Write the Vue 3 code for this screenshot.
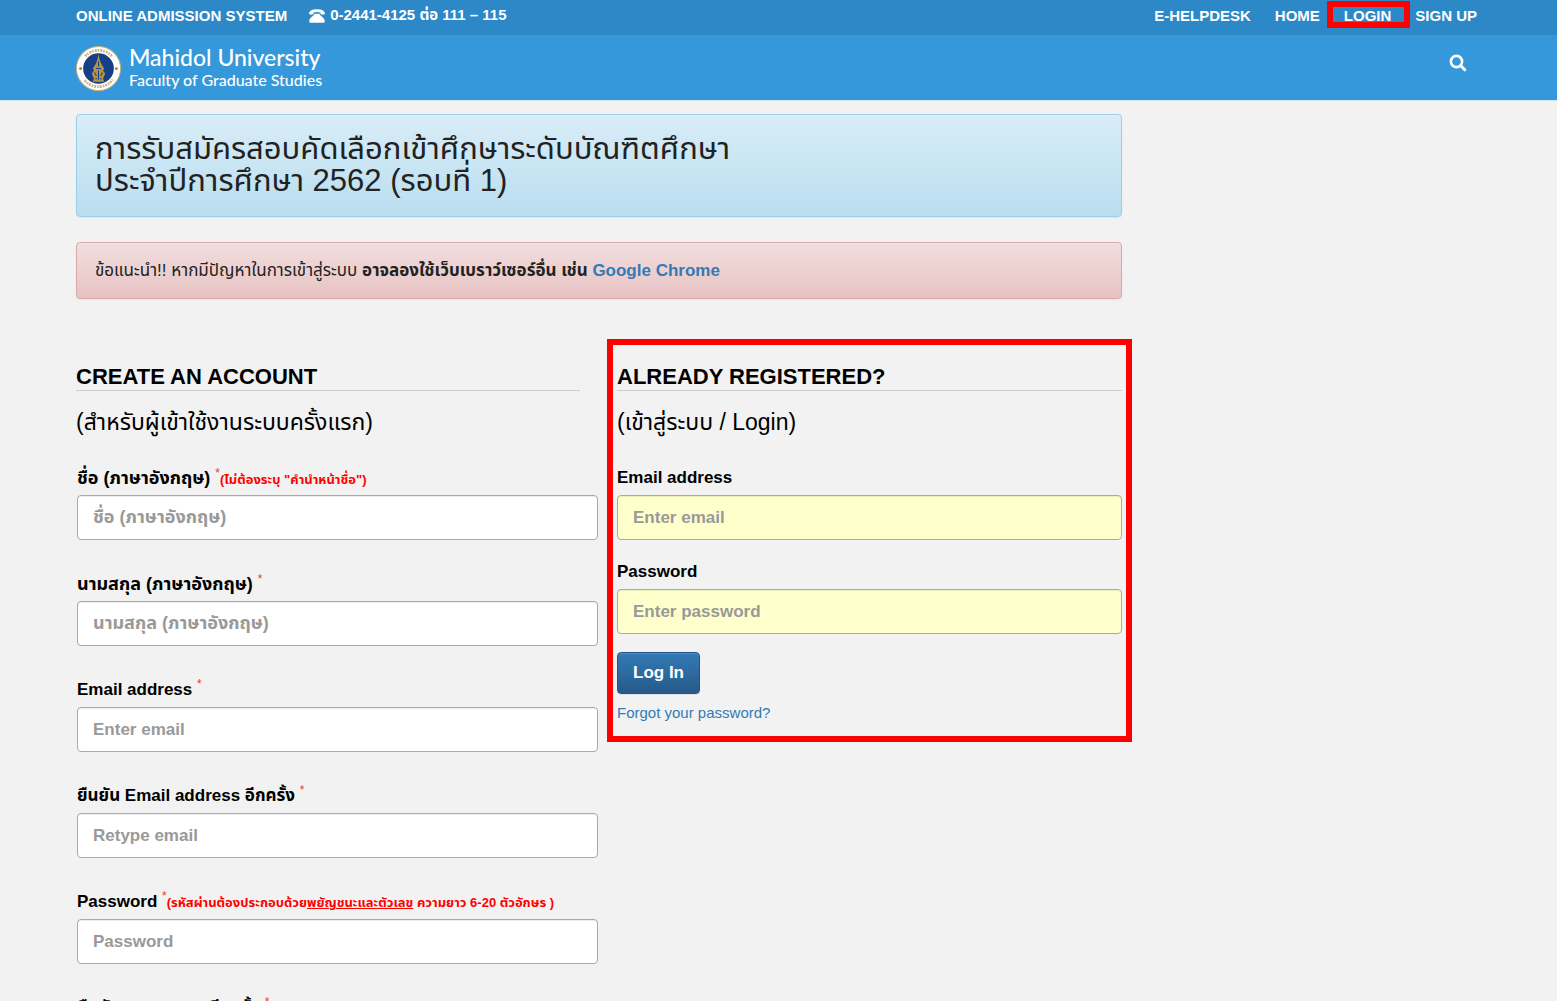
<template>
  <div class="page">
    <div class="topbar">
      <div class="container topbar__inner">
        <span class="topbar__title">ONLINE ADMISSION SYSTEM</span>
        <span class="topbar__phone">
          <svg class="phone-icon" viewBox="0 0 16 14" aria-hidden="true">
            <path d="M0 4.6C0.2 1.8 3.4 0.3 8 0.3s7.8 1.5 8 4.3c0 .7-.3.9-.9.9h-2.600c-.6 0-.9-.3-.9-.9V3.700C10.500 3.200 9.300 3 8 3s-2.500.2-3.600.7v.9c0 .6-.3.9-.9.9H.9c-.6 0-.9-.2-.9-.9z" />
            <path d="M5.500 4.700h5c.2 2.200 4.900 3.500 5.200 7v1.300c0 .5-.3.8-.8.8H1.100c-.5 0-.8-.3-.8-.8v-1.300c.3-3.500 5-4.800 5.200-7z" />
          </svg>
          0-2441-4125 ต่อ 111 – 115
        </span>
        <nav class="topbar__nav">
          <a
            v-for="link in links"
            :key="link.label"
            href="#"
            :class="{ marked: link.marked }"
          >{{ link.label }}</a>
        </nav>
      </div>
    </div>

    <header class="header">
      <div class="container header__inner">
        <a href="#" class="brand">
          <svg class="brand__seal" viewBox="0 0 44 44" aria-hidden="true">
            <circle cx="22" cy="22" r="21.500" fill="#fff" stroke="#c9b27c" />
            <circle cx="22" cy="22" r="17.800" fill="none" stroke="#b79a55" stroke-width="2.600" stroke-dasharray="1.500 1.100 2 .9" opacity=".75" />
            <path d="M1 22a21 21 0 0 1 6-14l5 5a14 14 0 0 0-4 9 14 14 0 0 0 3 8l-5 5a21 21 0 0 1-5-13z" fill="#fff" />
            <path d="M43 22a21 21 0 0 0-6-14l-5 5a14 14 0 0 1 4 9 14 14 0 0 1-3 8l5 5a21 21 0 0 0 5-13z" fill="#fff" />
            <circle cx="4.500" cy="22" r="1.500" fill="#b08a35" />
            <circle cx="39.500" cy="22" r="1.500" fill="#b08a35" />
            <circle cx="22" cy="22" r="15" fill="#173f86" />
            <path d="M22 8l1 5 1.500 4 3 5-1 2 2 3-2 5 1 3h-11l1-3-2-5 2-3-1-2 3-5 1.500-4z" fill="#b5933f" />
            <path d="M22 15v5M19.500 22h5M18 26l2 3M26 26l-2 3M22 24v9M19 32h1.500M23.500 32H25" stroke="#173f86" stroke-width="1" fill="none" />
          </svg>
          <span class="brand__text">
            <span class="brand__name">Mahidol University</span>
            <span class="brand__faculty">Faculty of Graduate Studies</span>
          </span>
        </a>
        <button class="search" type="button" aria-label="Search">
          <svg viewBox="0 0 18 18" aria-hidden="true">
            <circle cx="7.500" cy="7.500" r="5.600" fill="none" stroke="#fff" stroke-width="2.600" />
            <path d="M11.800 11.800l4 4" stroke="#fff" stroke-width="3" stroke-linecap="round" />
          </svg>
        </button>
      </div>
    </header>

    <div class="container">
      <main class="main">
        <div class="alert alert--info">
          <h1>การรับสมัครสอบคัดเลือกเข้าศึกษาระดับบัณฑิตศึกษา<br>ประจำปีการศึกษา 2562 (รอบที่ 1)</h1>
        </div>
        <div class="alert alert--danger">
          ข้อแนะนำ!! หากมีปัญหาในการเข้าสู่ระบบ
          <strong>อาจลองใช้เว็บเบราว์เซอร์อื่น เช่น <a href="#">Google Chrome</a></strong>
        </div>

        <div class="columns">
          <section class="register">
            <h2>CREATE AN ACCOUNT</h2>
            <p class="subtitle">(สำหรับผู้เข้าใช้งานระบบครั้งแรก)</p>
            <form class="register__form" @submit.prevent>
              <div v-for="field in registerFields" :key="field.id" class="field" :lang="field.lang">
                <label :for="field.id">
                  {{ field.label }} <sup>*</sup><small v-if="field.hint">{{ field.hint.before }}<u>{{ field.hint.key }}</u>{{ field.hint.after }}</small>
                </label>
                <input :id="field.id" :type="field.type" :placeholder="field.placeholder">
              </div>
            </form>
          </section>

          <section class="login">
            <h2>ALREADY REGISTERED?</h2>
            <p class="subtitle">(เข้าสู่ระบบ / Login)</p>
            <form class="login__form" @submit.prevent>
              <div class="field">
                <label for="login-email">Email address</label>
                <input id="login-email" v-model="email" type="email" placeholder="Enter email">
              </div>
              <div class="field">
                <label for="login-password">Password</label>
                <input id="login-password" v-model="password" type="password" placeholder="Enter password">
              </div>
              <button class="btn" type="submit">Log In</button>
              <a href="#" class="forgot">Forgot your password?</a>
            </form>
          </section>
        </div>
      </main>
    </div>
  </div>
</template>

<script setup>
import { ref } from 'vue'

const email = ref('')
const password = ref('')

const links = [
  { label: 'E-HELPDESK' },
  { label: 'HOME' },
  { label: 'LOGIN', marked: true },
  { label: 'SIGN UP' }
]

const registerFields = [
  {
    id: 'first-name',
    lang: 'th',
    label: 'ชื่อ (ภาษาอังกฤษ)',
    type: 'text',
    placeholder: 'ชื่อ (ภาษาอังกฤษ)',
    hint: { before: '(ไม่ต้องระบุ "คำนำหน้าชื่อ")', key: '', after: '' }
  },
  { id: 'last-name', lang: 'th', label: 'นามสกุล (ภาษาอังกฤษ)', type: 'text', placeholder: 'นามสกุล (ภาษาอังกฤษ)' },
  { id: 'email', label: 'Email address', type: 'email', placeholder: 'Enter email' },
  { id: 'email-again', label: 'ยืนยัน Email address อีกครั้ง', type: 'email', placeholder: 'Retype email' },
  {
    id: 'password',
    label: 'Password',
    type: 'password',
    placeholder: 'Password',
    hint: { before: '(รหัสผ่านต้องประกอบด้วย', key: 'พยัญชนะและตัวเลข', after: ' ความยาว 6-20 ตัวอักษร )' }
  },
  { id: 'password-again', label: 'ยืนยัน Password อีกครั้ง', type: 'password', placeholder: 'Retype password' }
]
</script>

<style>
body {
  background: #f2f2f2;
}
</style>

<style scoped>
.page {
  font-family: "Liberation Sans", "Noto Sans Thai", Loma, sans-serif;
  font-size: 15px;
  color: #000;
}

.page *,
.page *::after {
  box-sizing: border-box;
}

.container {
  max-width: 1405px;
  margin: 0 auto;
}

a {
  color: #337ab7;
  text-decoration: none;
}

/* Top bar */
.topbar {
  background: #2c88c6;
  color: #fff;
  font-weight: bold;
}

.topbar__inner {
  display: flex;
  align-items: center;
  height: 35px;
  padding: 0 4px 4px 0;
}

.topbar__phone {
  display: flex;
  align-items: center;
  gap: 5px;
  margin-left: 22px;
}

.phone-icon {
  width: 16px;
  height: 14px;
  fill: #fff;
}

.topbar__nav {
  display: flex;
  gap: 24px;
  margin-left: auto;
}

.topbar__nav a {
  position: relative;
  color: #fff;
}

.marked::after {
  content: "";
  position: absolute;
  inset: -6px -19px -4px -17px;
  border: 6px solid #f00;
}

/* Header */
.header {
  background: #3498db;
  border-bottom: 1px solid #d5e5f1;
}

.header__inner {
  display: flex;
  align-items: center;
  justify-content: space-between;
  height: 65px;
}

.brand {
  display: flex;
  align-items: center;
  gap: 8px;
  color: #fff;
  font-family: Lato, sans-serif;
  font-weight: 500;
}

.brand__seal {
  width: 45px;
  height: 45px;
  margin-top: 2px;
}

.brand__text {
  display: flex;
  flex-direction: column;
  padding-bottom: 2px;
}

.brand__name {
  font-size: 23px;
  line-height: 26px;
}

.brand__faculty {
  font-size: 16px;
  line-height: 20px;
}

.search {
  display: flex;
  padding: 0;
  margin: 0 14px 10px 0;
  border: 0;
  background: none;
}

.search svg {
  width: 18px;
  height: 18px;
}

/* Alerts */
.main {
  max-width: 1046px;
  padding-top: 13px;
}

.alert {
  margin-bottom: 25px;
  padding: 18px;
  border: 1px solid;
  border-radius: 4px;
  box-shadow: inset 0 1px 0 rgba(255, 255, 255, 0.25), 0 1px 2px rgba(0, 0, 0, 0.05);
}

.alert--info {
  border-color: #9acfea;
  background: linear-gradient(to bottom, #d9edf7, #b9def0);
}

.alert--info h1 {
  margin: 0;
  padding-bottom: 1px;
  font-size: 31px;
  font-weight: normal;
  line-height: 32px;
  color: #222;
}

.alert--danger {
  border-color: #dca7a7;
  background: linear-gradient(to bottom, #f2dede, #e7c3c3);
  font-size: 17px;
  line-height: 19px;
  color: #222;
}

/* Forms */
.columns {
  display: grid;
  grid-template-columns: 522px 1fr;
  gap: 19px;
  padding-top: 40px;
}

h2 {
  margin: 0;
  border-bottom: 1px solid #ccc;
  font-size: 22px;
  line-height: 26px;
}

.register h2 {
  margin-right: 18px;
}

.subtitle {
  margin: 18px 0 31px;
  font-size: 23px;
  line-height: 26px;
}

.field {
  display: flex;
  flex-direction: column;
  font-size: 17px;
}

.field:lang(th) {
  font-size: 18px;
}

.register__form {
  display: flex;
  flex-direction: column;
  gap: 32px;
  padding: 0 0 32px 1px;
}

label {
  height: 24px;
  margin-bottom: 5px;
  font-weight: bold;
  line-height: 24px;
  white-space: nowrap;
}

sup {
  font-size: 12px;
  font-weight: normal;
  line-height: 0;
  color: #f0342c;
}

small {
  font-size: 13px;
  color: #f00;
}

input {
  width: 100%;
  height: 45px;
  padding: 0 15px;
  border: 1px solid #aaa;
  border-radius: 4px;
  background: #fff;
  box-shadow: inset 0 1px 1px rgba(0, 0, 0, 0.075);
  font-family: inherit;
  font-size: inherit;
  font-weight: bold;
}

input::placeholder {
  color: #999;
  opacity: 1;
}

.login {
  position: relative;
}

.login::after {
  content: "";
  position: absolute;
  inset: -25px -10px auto;
  height: 403px;
  border: 6px solid #f00;
  pointer-events: none;
}

.login__form {
  display: flex;
  flex-direction: column;
  align-items: flex-start;
}

.login__form .field {
  align-self: stretch;
  margin-bottom: 20px;
}

.login__form .field:last-of-type {
  margin-bottom: 18px;
}

.login__form input {
  background: #ffffcc;
}

.btn {
  height: 42px;
  padding: 0 15px;
  border: 1px solid #245580;
  border-radius: 4px;
  background: linear-gradient(to bottom, #337ab7, #265a88);
  box-shadow: inset 0 1px 0 rgba(255, 255, 255, 0.15), 0 1px 1px rgba(0, 0, 0, 0.075);
  font-family: inherit;
  font-size: 17px;
  font-weight: bold;
  color: #fff;
}

.forgot {
  margin-top: 9px;
  line-height: 20px;
}
</style>
